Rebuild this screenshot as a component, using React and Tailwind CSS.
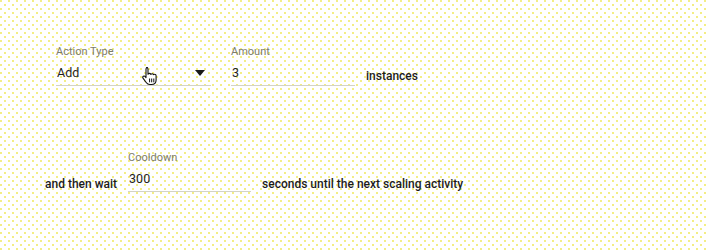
import React from "react";

function Hand() {
  return (
    <svg width="17" height="20" viewBox="0 0 17 20" className="absolute left-[85px] top-[21px]">
      <path
        d="M5.5 1.5c.8 0 1.5.6 1.5 1.4v5.3c.3-.5.8-.8 1.4-.8.7 0 1.2.4 1.4 1 .3-.4.8-.7 1.3-.7.7 0 1.2.4 1.4 1 .3-.3.7-.4 1.1-.4.9 0 1.5.7 1.5 1.5v4.2c0 2.7-2 4.5-4.6 4.5H8.8c-1.6 0-2.7-.7-3.6-2L2 12.2c-.5-.7-.3-1.5.3-1.9.6-.4 1.4-.3 1.9.3l.8 1V2.9c0-.8.7-1.4 1.5-1.4z"
        fill="#fff"
        stroke="#111"
        strokeWidth="1.1"
        strokeLinejoin="round"
      />
      <path d="M8.6 12.5v3.8M10.7 12.5v3.8M12.8 12.5v3.8" stroke="#111" strokeWidth="1" />
    </svg>
  );
}

function Field({ label, value, width, select }) {
  return (
    <div className="flex flex-col relative" style={{ width }}>
      <div className="text-[11px] leading-[14px] text-[#7d7d6c]">{label}</div>
      <div className="h-[27px] pt-[2px] flex items-center justify-between pl-[1px] pr-[6px] text-[12.5px] text-[#1f1f1f] border-b border-[#d3d3c6]">
        <span>{value}</span>
        {select && (
          <svg width="10" height="6" viewBox="0 0 10 6">
            <path d="M0 0h10L5 6z" fill="#1a1a1a" />
          </svg>
        )}
      </div>
      {select && <Hand />}
    </div>
  );
}

export default function App() {
  return (
    <div className="w-[708px] h-[250px] bg-white bg-[radial-gradient(circle_at_1px_1px,#efe85a_0.6px,transparent_1px),radial-gradient(circle_at_5px_5px,#efe85a_0.6px,transparent_1px)] bg-[length:8px_8px] font-['Roboto',sans-serif]">
      <div className="flex items-end pl-[56px] pt-[45px]">
        <Field label="Action Type" value="Add" width="155px" select />
        <div className="ml-[20px]">
          <Field label="Amount" value="3" width="124px" />
        </div>
        <div className="ml-[11px] mb-[0px] text-[12px] leading-[20px] font-medium text-[#1c1c1c]">instances</div>
      </div>
      <div className="flex items-end pl-[45px] mt-[65px]">
        <div className="mb-[-2px] text-[12px] leading-[20px] font-medium text-[#1c1c1c]">and then wait</div>
        <div className="ml-[11px]">
          <Field label="Cooldown" value="300" width="123px" />
        </div>
        <div className="ml-[11px] mb-[-2px] text-[12px] leading-[20px] font-medium text-[#1c1c1c]">
          seconds until the next scaling activity
        </div>
      </div>
    </div>
  );
}
